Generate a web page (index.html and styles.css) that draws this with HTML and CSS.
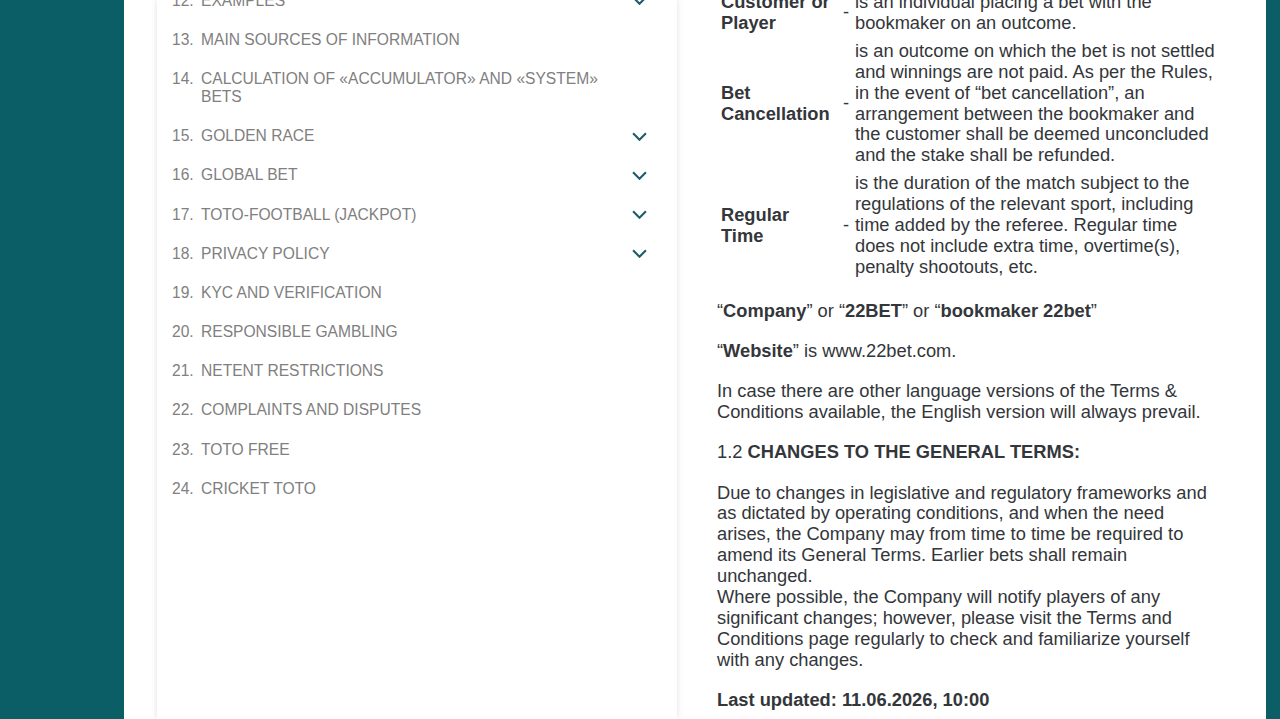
FILE: index.html
```html
<!DOCTYPE html>
<html lang="en">
<head>
<meta charset="utf-8">
<title>Terms and Conditions</title>
<link rel="stylesheet" href="styles.css">
</head>
<body>
<div class="page">
  <aside class="sidebar">
    <ul class="toc">
      <li class="toc-item"><span class="num">12.</span><span class="label">EXAMPLES</span><svg class="chev" viewBox="0 0 14 8"><path d="M1 1l6 6 6-6"/></svg></li>
      <li class="toc-item"><span class="num">13.</span><span class="label">MAIN SOURCES OF INFORMATION</span></li>
      <li class="toc-item"><span class="num">14.</span><span class="label">CALCULATION OF «ACCUMULATOR» AND «SYSTEM» BETS</span></li>
      <li class="toc-item"><span class="num">15.</span><span class="label">GOLDEN RACE</span><svg class="chev" viewBox="0 0 14 8"><path d="M1 1l6 6 6-6"/></svg></li>
      <li class="toc-item"><span class="num">16.</span><span class="label">GLOBAL BET</span><svg class="chev" viewBox="0 0 14 8"><path d="M1 1l6 6 6-6"/></svg></li>
      <li class="toc-item"><span class="num">17.</span><span class="label">TOTO-FOOTBALL (JACKPOT)</span><svg class="chev" viewBox="0 0 14 8"><path d="M1 1l6 6 6-6"/></svg></li>
      <li class="toc-item"><span class="num">18.</span><span class="label">PRIVACY POLICY</span><svg class="chev" viewBox="0 0 14 8"><path d="M1 1l6 6 6-6"/></svg></li>
      <li class="toc-item"><span class="num">19.</span><span class="label">KYC AND VERIFICATION</span></li>
      <li class="toc-item"><span class="num">20.</span><span class="label">RESPONSIBLE GAMBLING</span></li>
      <li class="toc-item"><span class="num">21.</span><span class="label">NETENT RESTRICTIONS</span></li>
      <li class="toc-item"><span class="num">22.</span><span class="label">COMPLAINTS AND DISPUTES</span></li>
      <li class="toc-item"><span class="num">23.</span><span class="label">TOTO FREE</span></li>
      <li class="toc-item"><span class="num">24.</span><span class="label">CRICKET TOTO</span></li>
    </ul>
  </aside>
  <main class="content">
    <div class="defs">
      <div class="term">Customer or Player</div><div class="dash">-</div><div class="def">is an individual placing a bet with the bookmaker on an outcome.</div>
      <div class="term">Bet Cancellation</div><div class="dash">-</div><div class="def">is an outcome on which the bet is not settled and winnings are not paid. As per the Rules, in the event of “bet cancellation”, an arrangement between the bookmaker and the customer shall be deemed unconcluded and the stake shall be refunded.</div>
      <div class="term">Regular Time</div><div class="dash">-</div><div class="def">is the duration of the match subject to the regulations of the relevant sport, including time added by the referee. Regular time does not include extra time, overtime(s), penalty shootouts, etc.</div>
    </div>
    <p>“<b>Company</b>” or “<b>22BET</b>” or “<b>bookmaker 22bet</b>”</p>
    <p>“<b>Website</b>” is www.22bet.com.</p>
    <p>In case there are other language versions of the Terms &amp; Conditions available, the English version will always prevail.</p>
    <p>1.2 <b>CHANGES TO THE GENERAL TERMS:</b></p>
    <p>Due to changes in legislative and regulatory frameworks and as dictated by operating conditions, and when the need arises, the Company may from time to time be required to amend its General Terms. Earlier bets shall remain unchanged.<br>Where possible, the Company will notify players of any significant changes; however, please visit the Terms and Conditions page regularly to check and familiarize yourself with any changes.</p>
    <p><b>Last updated: 11.06.2026, 10:00</b></p>
  </main>
</div>
</body>
</html>
```

FILE: styles.css
```css
html, body {
  margin: 0;
  padding: 0;
  height: 100%;
  overflow: hidden;
}

body {
  background: #0c5e66;
  font-family: "Liberation Sans", Arial, sans-serif;
}

.page {
  margin: 0 14px 0 124px;
  height: 100vh;
  background: #ffffff;
  display: flex;
  align-items: flex-start;
  overflow: hidden;
}

.sidebar {
  margin-left: 33px;
  width: 520px;
  flex: none;
  align-self: stretch;
  background: #ffffff;
  box-shadow: 0 0 6px rgba(0, 0, 0, 0.13);
}

.toc {
  list-style: none;
  margin: -19px 0 0 0;
  padding: 0 30px 0 15px;
}

.toc-item {
  display: flex;
  align-items: flex-start;
  padding: 10.6px 0;
  font-size: 15.6px;
  line-height: 18px;
  color: #808080;
}

.num {
  flex: none;
  width: 29px;
}

.label {
  flex: 1;
  padding-right: 40px;
}

.chev {
  flex: none;
  align-self: center;
  width: 15px;
  height: 9px;
  fill: none;
  stroke: #1d5e69;
  stroke-width: 2;
}

.content {
  margin-left: 40px;
  margin-top: -8px;
  width: 503px;
  flex: none;
  color: #33363a;
  font-size: 18.3px;
  line-height: 20.9px;
}

.defs {
  display: grid;
  grid-template-columns: 114px 24px 1fr;
  row-gap: 7px;
  align-items: center;
  margin-bottom: 23px;
}

.term {
  padding-left: 4px;
  font-weight: bold;
}

.dash {
  padding-left: 6px;
  text-align: center;
}

.content p {
  margin: 0 0 19.3px 0;
}

.content b {
  font-weight: bold;
}
```
